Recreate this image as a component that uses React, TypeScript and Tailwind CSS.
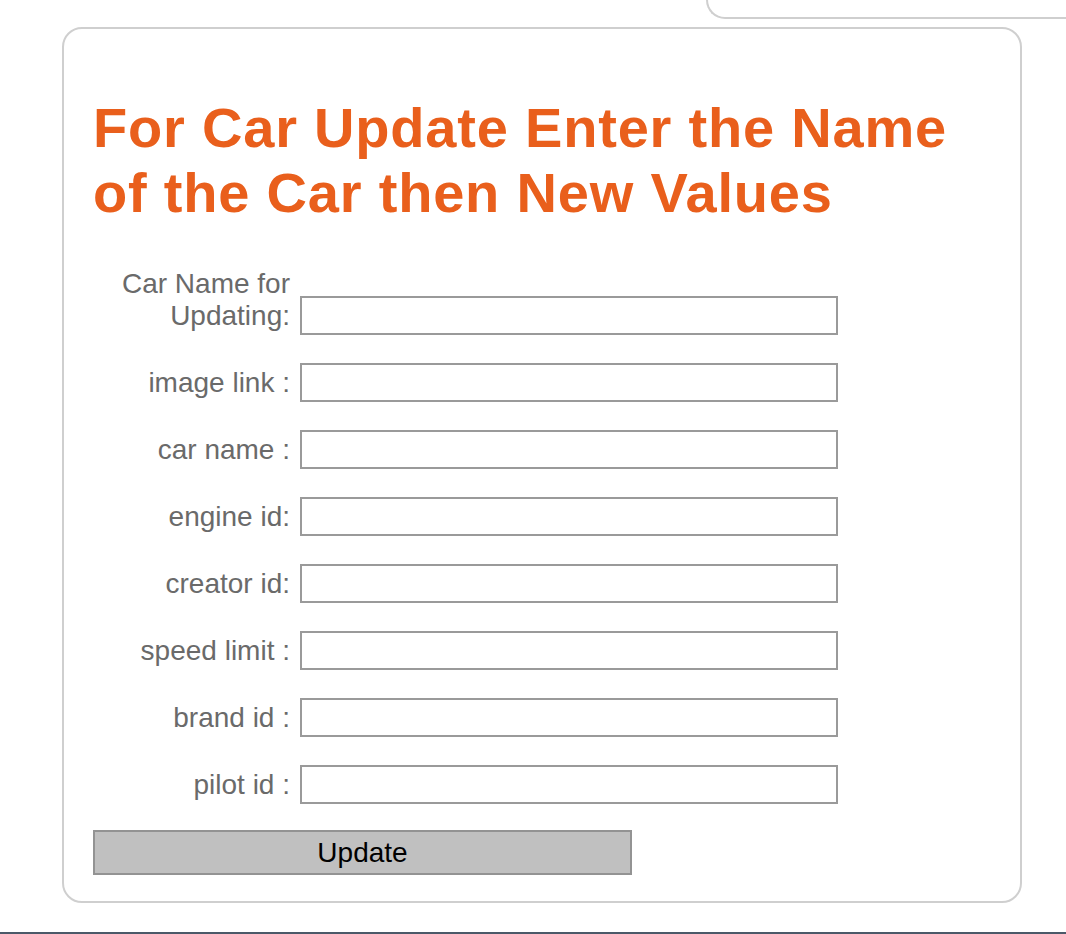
import { useState } from "react";

const fields = [
  { key: "oldName", label: "Car Name for Updating:" },
  { key: "image", label: "image link :" },
  { key: "name", label: "car name :" },
  { key: "engine", label: "engine id:" },
  { key: "creator", label: "creator id:" },
  { key: "speed", label: "speed limit :" },
  { key: "brand", label: "brand id :" },
  { key: "pilot", label: "pilot id :" },
];

export default function App() {
  const [values, setValues] = useState<Record<string, string>>({});

  return (
    <div className="h-[934px] w-[1066px] overflow-hidden bg-white font-['Liberation_Sans',Arial,sans-serif] flex flex-col">
      {/* tail of the header box above */}
      <div className="ml-[706px] h-[19px] w-[500px] shrink-0 border-l-2 border-b-2 border-[#cfcfcf] rounded-bl-[26px]" />

      <div className="ml-[62px] mt-[8px] w-[960px] h-[876px] shrink-0 border-2 border-[#cfcfcf] rounded-[20px] pl-[29px] pt-[67px]">
        <h1 className="text-[56px] leading-[64.5px] font-bold tracking-[0.8px] text-[#e95f1c] w-[880px]">
          For Car Update Enter the Name of the Car then New Values
        </h1>

        <form
          className="mt-[43px] flex flex-col gap-[28px]"
          onSubmit={(e) => e.preventDefault()}
        >
          {fields.map((f) => (
            <div key={f.key} className="flex items-end gap-[10px]">
              <label
                htmlFor={f.key}
                className="w-[197px] text-right text-[28px] leading-[32px] text-[#6a6a6a] mb-[3px]"
              >
                {f.label}
              </label>
              <input
                id={f.key}
                type="text"
                value={values[f.key] ?? ""}
                onChange={(e) => setValues({ ...values, [f.key]: e.target.value })}
                className="w-[538px] h-[39px] border-2 border-[#9a9a9a] bg-white px-1 text-[20px] outline-none"
              />
            </div>
          ))}

          <button
            type="submit"
            className="mt-[-2px] w-[539px] h-[45px] bg-[#c0c0c0] border-2 border-[#939393] text-[28px] leading-none text-black"
          >
            Update
          </button>
        </form>
      </div>

      <div className="flex-1" />
      <div className="h-[2px] shrink-0 bg-[#4b5968]" />
    </div>
  );
}
